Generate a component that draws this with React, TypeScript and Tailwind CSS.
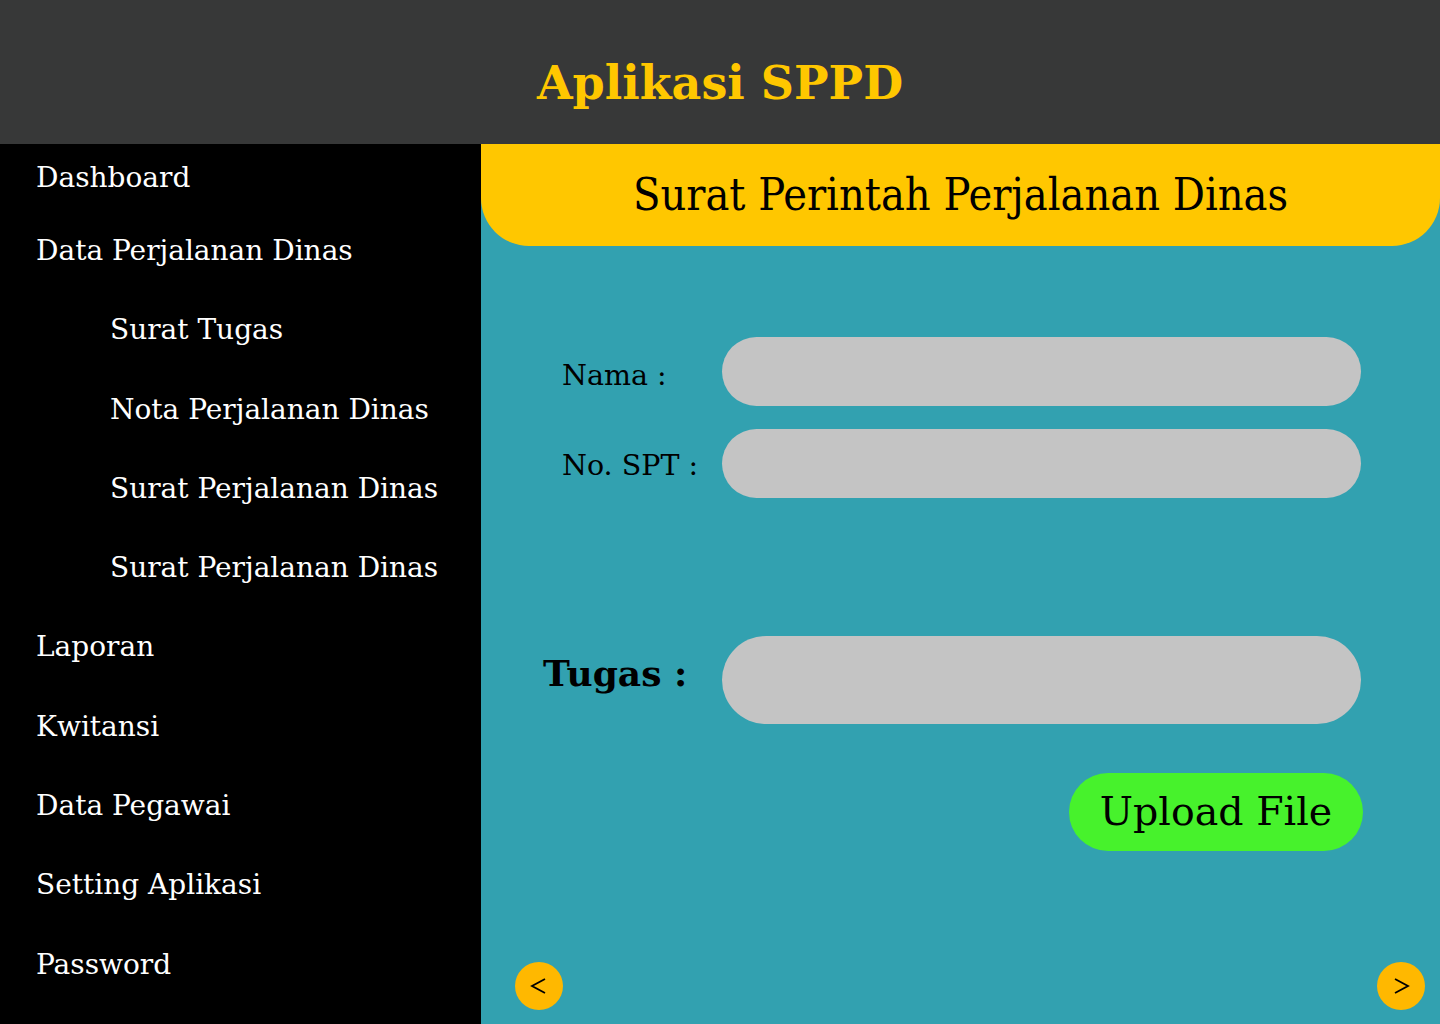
import React from "react";

const serif = { fontFamily: '"DejaVu Serif", "Liberation Serif", serif' };

type NavItem = { label: string; sub?: boolean };

const navItems: NavItem[] = [
  { label: "Dashboard" },
  { label: "Data Perjalanan Dinas" },
  { label: "Surat Tugas", sub: true },
  { label: "Nota Perjalanan Dinas", sub: true },
  { label: "Surat Perjalanan Dinas", sub: true },
  { label: "Surat Perjalanan Dinas", sub: true },
  { label: "Laporan" },
  { label: "Kwitansi" },
  { label: "Data Pegawai" },
  { label: "Setting Aplikasi" },
  { label: "Password" },
];

export default function App() {
  return (
    <div className="flex h-[1024px] w-[1440px] flex-col overflow-hidden" style={serif}>
      {/* Top bar */}
      <header className="flex h-[144px] shrink-0 items-center justify-center bg-[#373838] pt-[22px]">
        <h1 className="text-[46px] font-bold leading-none text-[#FFC700]">Aplikasi SPPD</h1>
      </header>

      <div className="flex min-h-0 flex-1">
        {/* Sidebar */}
        <aside className="flex w-[481px] shrink-0 flex-col bg-black pt-[14px] text-white">
          {navItems.map((item, idx) => (
            <div
              key={idx}
              className={[
                "flex items-start text-[28px] leading-[40px]",
                idx === 0 ? "h-[73px]" : "h-[79.3px]",
                item.sub ? "pl-[110px]" : "pl-[36px]",
              ].join(" ")}
            >
              {item.label}
            </div>
          ))}
        </aside>

        {/* Main */}
        <main className="flex flex-1 flex-col bg-[#32A1B0]">
          <div className="flex h-[102px] shrink-0 items-center justify-center rounded-b-[48px] bg-[#FFC700]">
            <h2
              className="text-[44.6px] leading-none text-black"
              style={{ fontFamily: '"DejaVu Serif Condensed", "DejaVu Serif", serif', fontStretch: "condensed" }}
            >
              Surat Perintah Perjalanan Dinas
            </h2>
          </div>

          <div className="mt-[91px] flex flex-col gap-[23px]">
            <div className="flex items-center">
              <label className="mt-[10px] w-[241px] shrink-0 pl-[81px] text-[28.5px] text-black">Nama :</label>
              <div className="h-[69px] w-[639px] rounded-full bg-[#C4C4C4]" />
            </div>
            <div className="flex items-center">
              <label className="mt-[6px] w-[241px] shrink-0 pl-[81px] text-[28.5px] text-black">No. SPT :</label>
              <div className="h-[69px] w-[639px] rounded-full bg-[#C4C4C4]" />
            </div>
          </div>

          <div className="mt-[138px] flex items-center">
            <label className="-mt-[14px] w-[241px] shrink-0 pl-[62px] text-[36px] font-bold text-black">Tugas :</label>
            <div className="h-[88px] w-[639px] rounded-full bg-[#C4C4C4]" />
          </div>

          <div className="mt-[49px] flex justify-end pr-[77px]">
            <button
              type="button"
              className="flex h-[78px] w-[294px] items-center justify-center rounded-full bg-[#47F22C] text-[39.5px] text-black"
            >
              Upload File
            </button>
          </div>

          <div className="mt-auto flex items-center justify-between pb-[14px] pl-[34px] pr-[15px]">
            <button
              type="button"
              className="flex h-[48px] w-[48px] items-center justify-center rounded-full bg-[#FFB800]"
            >
              <svg width="20" height="20" viewBox="0 0 20 20" fill="none" stroke="black" strokeWidth="1.8">
                <path d="M16 3 L3 10 L16 17" />
              </svg>
            </button>
            <button
              type="button"
              className="flex h-[48px] w-[48px] items-center justify-center rounded-full bg-[#FFB800]"
            >
              <svg width="20" height="20" viewBox="0 0 20 20" fill="none" stroke="black" strokeWidth="1.8">
                <path d="M4 3 L17 10 L4 17" />
              </svg>
            </button>
          </div>
        </main>
      </div>
    </div>
  );
}
